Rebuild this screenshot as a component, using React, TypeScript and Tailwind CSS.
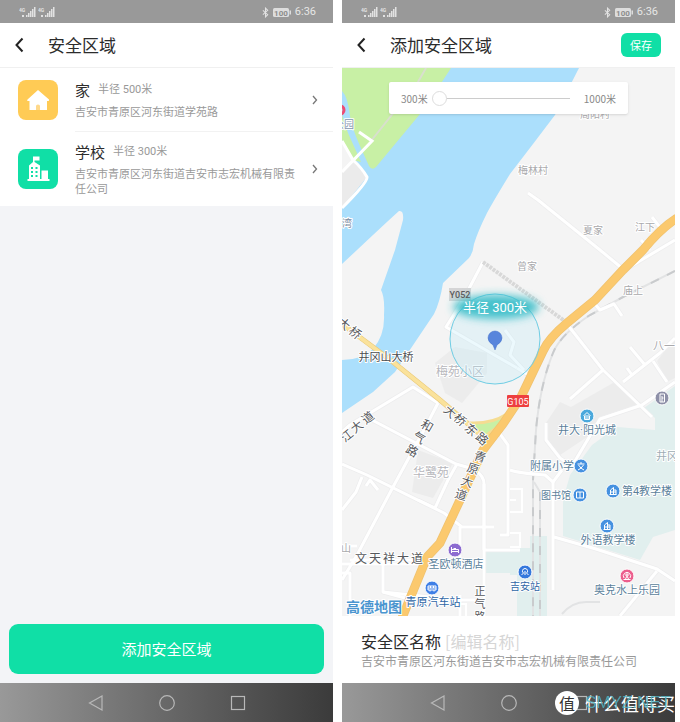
import type { ReactNode } from "react";

type Point = { x: number; y: number };

type MapLabel = Point & {
    text: string;
    size?: number;
    color?: string;
    rotate?: number;
};

const areaColor = "#a9a9ac";
const roadColor = "#56585c";
const placeColor = "#5b7f9b";

const mapLabels: MapLabel[] = [
    { text: "周阳村", x: 595, y: 118, size: 10, color: areaColor },
    { text: "梅林村", x: 533, y: 174, size: 10, color: areaColor },
    { text: "夏家", x: 593, y: 234, size: 10, color: areaColor },
    { text: "江下", x: 645, y: 231, size: 10, color: areaColor },
    { text: "曾家", x: 527, y: 270, size: 10, color: areaColor },
    { text: "庙上", x: 633, y: 294, size: 10, color: areaColor },
    { text: "八一", x: 664, y: 350, size: 11, color: areaColor },
    { text: "公园", x: 344, y: 128, size: 10, color: "#8294ae" },
    { text: "湾", x: 347, y: 227, size: 10, color: "#7b8ba1" },
    { text: "梅苑小区", x: 460, y: 376, size: 12, color: "#b6b6bb" },
    { text: "华鹭苑", x: 431, y: 477, size: 12, color: "#b6b6bb" },
    { text: "井冈", x: 667, y: 460, size: 11, color: "#9eadb5" },
    { text: "山", x: 346, y: 552, size: 10, color: areaColor },
    { text: "井冈山大桥", x: 386, y: 361, size: 11, color: "#4b4d50" },
    { text: "井大·阳光城", x: 587, y: 434, size: 11, color: placeColor },
    { text: "附属小学", x: 552, y: 470, size: 11, color: placeColor },
    { text: "图书馆", x: 556, y: 499, size: 10, color: placeColor },
    { text: "第4教学楼", x: 647, y: 495, size: 11, color: placeColor },
    { text: "外语教学楼", x: 608, y: 544, size: 11, color: placeColor },
    { text: "奥克水上乐园", x: 627, y: 594, size: 11, color: placeColor },
    { text: "圣欧顿酒店", x: 456, y: 568, size: 11, color: placeColor },
    { text: "青原汽车站", x: 433, y: 606, size: 11, color: "#2f66a6" },
    { text: "吉安站", x: 525, y: 590, size: 10, color: "#2f66a6" },
];

// Street names are set one character at a time so they follow the road.
const roadLabels: MapLabel[] = [
    { text: "大", x: 344, y: 324, rotate: 40 },
    { text: "桥", x: 355, y: 333, rotate: 40 },
    { text: "大", x: 450, y: 412, rotate: 42 },
    { text: "桥", x: 460, y: 420, rotate: 42 },
    { text: "东", x: 471, y: 430, rotate: 42 },
    { text: "路", x: 482, y: 439, rotate: 42 },
    { text: "青", x: 480, y: 457, rotate: 18 },
    { text: "原", x: 473, y: 469, rotate: 18 },
    { text: "大", x: 467, y: 482, rotate: 18 },
    { text: "道", x: 461, y: 495, rotate: 18 },
    { text: "江", x: 347, y: 436, rotate: -38 },
    { text: "大", x: 357, y: 427, rotate: -38 },
    { text: "道", x: 368, y: 418, rotate: -38 },
    { text: "和", x: 427, y: 426, rotate: 30 },
    { text: "气", x: 419, y: 438, rotate: 30 },
    { text: "路", x: 412, y: 451, rotate: 30 },
    { text: "文", x: 361, y: 559 },
    { text: "天", x: 375, y: 559 },
    { text: "祥", x: 389, y: 559 },
    { text: "大", x: 403, y: 559 },
    { text: "道", x: 417, y: 559 },
    { text: "正", x: 480, y: 591, size: 11 },
    { text: "气", x: 480, y: 604, size: 11 },
    { text: "路", x: 480, y: 617, size: 11 },
];

const minorRoads = [
    "M342 432 L350 425 L413 387 L438 403",
    "M372 420 L456 464 L470 468",
    "M342 464 L367 475 L444 513 L462 527 L494 527",
    "M438 403 L424 430 L393 487 L357 555 L342 580",
    "M362 477 L356 492 L342 510",
    "M457 464 L448 480 L435 508 L418 500",
    "M366 486 L370 480 L378 490",
    "M475 470 Q484 476 484 484 V550",
    "M484 484 V616",
    "M460 527 V560",
    "M495 427 L508 445 V535 H500",
    "M510 470 Q518 473 545 475 L553 482 L562 470",
    "M553 482 V590",
    "M546 423 V440 L560 458 L572 466",
    "M528 193 L538 200 L600 250 L623 269",
    "M567 324 L603 370 L652 417",
    "M603 370 L570 399",
    "M572 466 L600 419 L642 405 L675 382",
    "M623 382 L660 353 L675 338",
    "M630 347 L645 365",
    "M653 361 L667 382",
    "M627 368 L632 375",
    "M628 268 L675 240",
    "M594 303 L600 310 L614 304 L622 316",
    "M641 240 L650 250",
    "M652 217 L662 230",
    "M483 262 L463 300 L446 327 L517 368",
    "M517 368 L530 376",
    "M505 330 L514 342 L510 355 L524 370",
    "M554 537 L596 549 L657 569 L675 581",
    "M657 571 L620 616",
    "M342 546 H357 M342 573 H350 V616",
    "M383 560 V592 L430 597",
    "M350 560 H425",
    "M383 592 L405 598",
    "M427 600 H475 M460 595 V616",
    "M342 564 H484",
    "M484 550 H520",
];

const blockOutlines = ["M510 489 H522 V512 H510", "M510 500 H516", "M510 533 H520 V547 H510", "M440 604 H466 V616"];

const highway =
    "M677 218 Q660 229 643 250 L623 270 L595 300 L567 323 Q549 338 543 351 L521 397 L503 424 L483 450 L460 500 L440 543 L427 557 L402 618";

function BuildingGlyph() {
    return <path d="M-3.5 3.5 H3.5 M-2.5 3.5 V-1 L0.5 -3.5 V3.5 M0.5 -1 H3 V3.5 M-2.5 1 H3" />;
}

const pins: (Point & { color: string; glyph: ReactNode })[] = [
    { x: 587, y: 416, color: "#4aa8dc", glyph: <path d="M-3.5 0 L0 -3.5 L3.5 0 M-2.5 0 V3.5 H2.5 V0 M-1 3.5 V1 M1 3.5 V1 M-2 0 H2" /> },
    { x: 581, y: 466, color: "#4591e0", glyph: <path d="M0 -4 V-2 M-3.5 -2 H3.5 M-2.5 -1 Q0 3 3 4 M2.5 -1 Q0 3 -3 4" /> },
    { x: 580, y: 495, color: "#4591e0", glyph: <path d="M0 -3 H-3.5 V3 H3.5 V-3 H0 V3" /> },
    { x: 613, y: 491, color: "#4591e0", glyph: <BuildingGlyph /> },
    { x: 607, y: 526, color: "#4591e0", glyph: <BuildingGlyph /> },
    { x: 525, y: 572, color: "#3478dc", glyph: <path d="M-3.5 3 L-1.5 1 Q-3 0 -2.5 -1.5 Q-2 -3.5 0 -3.5 Q2 -3.5 2.5 -1.5 Q3 0 1.5 1 L3.5 3 M0 -1 V3" /> },
    { x: 432, y: 588, color: "#3f7fe6", glyph: <path d="M-4 -2 H4 V2 H-4 Z M-4 0 H4 M-2 2 V3.5 M2 2 V3.5 M-1.5 -2 V0 M1.5 -2 V0" /> },
    { x: 455, y: 550, color: "#8c6bd0", glyph: <path d="M-3.5 -3 V3 M-3.5 1.5 H3.5 V3 M3.5 1.5 V-0.5 H-3.5 M-1.5 -1.5 H1" /> },
    { x: 627, y: 576, color: "#ec5f8d", glyph: <path d="M-3 2 A3.6 3.6 0 1 1 3 2 M-2 4 L0 0 L2 4 M-2 -1 H2 M0 -3 V0 M-3.5 3.5 H3.5" /> },
    { x: 662, y: 398, color: "#8e90a8", glyph: <path d="M-2 -4 H2.5 V4 H-2 Z M0 -2 V4 M0 0 H1.5" /> },
];

function MapCanvas() {
    return (
        <svg
            viewBox="342 68 333 548"
            preserveAspectRatio="xMidYMid slice"
            className="absolute inset-0 h-full w-full font-[Roboto,'Noto_Sans_CJK_SC',sans-serif]"
            role="img"
            aria-label="地图"
        >
            <defs>
                <filter id="glow" x="-30%" y="-60%" width="160%" height="220%">
                    <feGaussianBlur stdDeviation="4" />
                </filter>
            </defs>
            <rect x="342" y="68" width="333" height="548" fill="#f4f4f4" />

            {/* river and park */}
            <path
                d="M342 68 H579 L555 115 L533 144 L510 174 Q494 200 487 213 Q478 231 474 244 Q473 253 469 258 L443 283 Q440 302 434 314 L395 372 L373 392 L342 413 V360 Q362 360 373 349 Q385 335 384 315 Q385 297 381 290 L395 250 L403 220 Q404 210 399 211 Q390 219 357 250 L342 264 Z"
                fill="#abdffc"
            />
            <path d="M342 68 H451 L434 94 L420 114 L376 167 Q372 171 369 166 L360 146 Q352 128 350 116 Q348 97 342 91 Z" fill="#c8f0a5" />
            <path d="M342 115 L348 133 L361 162 L353 160 L342 140 Z" fill="#c8f0a5" />
            <path d="M342 141 L353 160 L367 177 L342 208 Z" fill="#ebebeb" />
            <path d="M342 141 L353 160 L342 171 Z" fill="#f4f4f4" />
            <path d="M426 68 L418 82 L371 141" fill="none" stroke="#d9dfce" strokeWidth="2" />

            {/* built-up blocks and campus */}
            <g fill="#ececec">
                <path d="M435 363 L455 347 L487 353 V373 L462 403 L445 393 Z" />
                <path d="M418 450 L453 463 L433 498 L412 492 Z" />
                <path d="M560 402 L571 407 L613 383 L641 403 L600 419 L590 435 L560 455 L546 440 V423 Z" />
                <path d="M657 361 L675 338 V378 L667 382 Z" />
            </g>
            <g fill="#e1efee">
                <path d="M675 386 L644 408 L655 418 V430 L617 427 L592 445 L570 475 L563 500 V536 L640 560 L653 537 L675 530 Z" />
                <path d="M510 548 H530 V536 H547 V616 H517 V575 H510 Z" />
                <path d="M484 552 H513 V573 H484 Z" />
            </g>

            {/* railway */}
            <g fill="none" stroke="#e2e3e4" strokeWidth="2">
                <path d="M675 271 L623 297 L590 315 Q560 335 553 353 Q540 385 536 430 L533 480 V616" />
                <path d="M534 482 L540 492 V616" />
                <path d="M562 614 Q572 602 586 602 H600" />
            </g>
            <g fill="none" stroke="#c9cbcd" strokeWidth="2" strokeDasharray="9 9">
                <path d="M675 271 L623 297 L590 315 Q560 335 553 353 Q540 385 536 430 L533 480 V616" />
                <path d="M540 492 V616" />
            </g>

            {minorRoads.map((d) => (
                <path key={d} d={d} fill="none" stroke="#ededee" strokeWidth="4.5" strokeLinejoin="round" />
            ))}
            {minorRoads.map((d) => (
                <path key={d} d={d} fill="none" stroke="#ffffff" strokeWidth="3" strokeLinejoin="round" />
            ))}
            {blockOutlines.map((d) => (
                <path key={d} d={d} fill="none" stroke="#ffffff" strokeWidth="2" />
            ))}
            <path d="M359 132 L372 141 L342 172 M342 141 L353 160 Q362 168 367 177 Q368 182 342 208" fill="none" stroke="#ffffff" strokeWidth="3" />
            <path d="M483 262 L566 322" fill="none" stroke="#d8d8d8" strokeWidth="4" strokeDasharray="3 1" />

            {/* main roads */}
            <path d="M470 423 Q490 425 506 416 L490 440 Z" fill="#c8f0a5" />
            <path d="M470 423 Q492 424 507 414 M484 440 Q486 433 500 426" fill="none" stroke="#f5dc92" strokeWidth="3" />
            <path d="M342 324 L393 362 L440 400 L487 440" fill="none" stroke="#eac978" strokeWidth="5" />
            <path d="M342 324 L393 362 L440 400 L487 440" fill="none" stroke="#fae29b" strokeWidth="4" />
            <path d={highway} fill="none" stroke="#efc270" strokeWidth="9" />
            <path d={highway} fill="none" stroke="#fbc96e" strokeWidth="7.5" />

            {/* labels */}
            <g textAnchor="middle" stroke="#ffffff" strokeWidth="2" strokeLinejoin="round" className="[paint-order:stroke]">
                {mapLabels.map((l) => (
                    <text key={l.text} x={l.x} y={l.y} fontSize={l.size} fill={l.color}>
                        {l.text}
                    </text>
                ))}
                {roadLabels.map((l) => (
                    <text
                        key={`${l.text}${l.x}`}
                        x={l.x}
                        y={l.y}
                        dy="4"
                        fontSize={l.size ?? 12}
                        fill={roadColor}
                        transform={l.rotate ? `rotate(${l.rotate} ${l.x} ${l.y})` : undefined}
                    >
                        {l.text}
                    </text>
                ))}
            </g>
            <circle cx="340" cy="110" r="4" fill="none" stroke="#ec4d73" strokeWidth="3" />
            {pins.map((p) => (
                <g key={`${p.x}-${p.y}`} transform={`translate(${p.x} ${p.y})`} fill="none" stroke="#ffffff" strokeWidth="1">
                    <circle r="7" fill={p.color} />
                    {p.glyph}
                </g>
            ))}

            {/* road shields */}
            <rect x="449" y="288" width="22" height="13" fill="#d5d5d6" />
            <rect x="507" y="395" width="22" height="12" rx="1" fill="#ee3f3f" />
            <text x="518" y="405" textAnchor="middle" fontSize="9" fill="#ffffff">G105</text>

            {/* selected zone */}
            <circle cx="495" cy="339" r="45" fill="#bfeaf8" fillOpacity="0.3" stroke="#6fcde4" strokeWidth="1" />
            <ellipse cx="496" cy="307" rx="43" ry="12" fill="#35bcc8" fillOpacity="0.9" filter="url(#glow)" />
            <text x="460" y="298" textAnchor="middle" fontSize="9" fontWeight="500" fill="#5a5b5d">Y052</text>
            <text x="495" y="312" textAnchor="middle" fontSize="13" fill="#ffffff">半径 300米</text>
            <path d="M495 350 L493 345 Q488 342 488 338 A7 7 0 0 1 502 338 Q502 342 497 345 Z" fill="#5785dc" stroke="#4571c8" strokeWidth="0.5" />

            <text x="374" y="612" textAnchor="middle" fontSize="14" fontWeight="700" fill="#4a95cf" stroke="#ffffff" strokeWidth="2" className="[paint-order:stroke]">
                高德地图
            </text>
        </svg>
    );
}

function SignalIcon() {
    return (
        <svg viewBox="0 0 17 14" className="h-[14px] w-[17px]" fill="#e2e2e2" aria-hidden="true">
            <text x="0" y="6" fontSize="5" fontWeight="700">4G</text>
            <path d="M3 9h2v2H3zM7 9h1.5v2H7zM9 7h1.5v4H9zM11 5h1.5v6H11zM13 3h1.5v8H13zM15 1h1.5v10H15z" />
        </svg>
    );
}

function StatusBar() {
    return (
        <div className="flex h-[23px] shrink-0 items-center bg-[#999999] pt-[2px] pr-[17px] pl-[19px] font-[Roboto,sans-serif] text-[11px] text-[#e6e6e6]">
            <div className="flex gap-[2px]">
                <SignalIcon />
                <SignalIcon />
            </div>
            <div className="ml-auto flex items-center gap-1">
                <svg viewBox="0 0 8 12" className="h-[11px] w-[7px]" fill="none" stroke="#e2e2e2" strokeWidth="1.2" aria-hidden="true">
                    <path d="M1 3.5 L6.5 8.5 L4 11 V1 L6.5 3.5 L1 8.5" />
                </svg>
                <svg viewBox="0 0 18 10" className="h-[10px] w-[18px]" aria-hidden="true">
                    <rect width="16" height="9" rx="1.5" fill="#dddddd" />
                    <rect x="16.5" y="2.5" width="1.5" height="4" fill="#dddddd" />
                    <text x="8" y="7.5" textAnchor="middle" fontSize="8" fontWeight="700" fill="#8c8c8c">100</text>
                </svg>
                <span>6:36</span>
            </div>
        </div>
    );
}

function NavBar({ children }: { children?: ReactNode }) {
    return (
        <nav className="relative flex h-[39px] shrink-0 items-center justify-center gap-[55px] bg-linear-to-r from-[#999999] to-[#3b3b3b]">
            <button type="button" aria-label="返回">
                <svg viewBox="0 0 16 16" className="size-4" fill="none" stroke="#b8b8b8" strokeWidth="1.2">
                    <path d="M14 1 V15 L1.5 8 Z" />
                </svg>
            </button>
            <button type="button" aria-label="主页">
                <svg viewBox="0 0 16 16" className="size-4" fill="none" stroke="#b8b8b8" strokeWidth="1.2">
                    <circle cx="8" cy="8" r="7.3" />
                </svg>
            </button>
            <button type="button" aria-label="最近任务">
                <svg viewBox="0 0 16 16" className="size-4" fill="none" stroke="#b8b8b8" strokeWidth="1.2">
                    <rect x="1.5" y="1.5" width="13" height="13" />
                </svg>
            </button>
            {children}
        </nav>
    );
}

function Header({ title, children }: { title: string; children?: ReactNode }) {
    return (
        <header className="flex h-[45px] shrink-0 items-center border-b border-[#f0f0f0] bg-white px-[14px]">
            <button type="button" aria-label="返回">
                <svg viewBox="0 0 12 16" className="h-4 w-3" fill="none" stroke="#222222" strokeWidth="2">
                    <path d="M8.5 1.5 L2.5 8 L8.5 14.5" />
                </svg>
            </button>
            <h1 className="ml-[22px] text-[17px] text-[#2c2c2c]">{title}</h1>
            {children}
        </header>
    );
}

function HomeIcon() {
    return (
        <svg viewBox="0 0 40 40" className="size-10" aria-hidden="true">
            <path d="M20 10 L31 19.5 Q31.5 21 30 21 H29 V30 H11.5 V21 H10.5 Q8.5 21 9.5 19.5 Z" fill="#fff" />
            <path d="M18 30 V26 Q18 24.5 20 24.5 Q22 24.5 22 26 V30 Z" fill="#ffd98a" />
        </svg>
    );
}

function SchoolIcon() {
    return (
        <svg viewBox="0 0 40 40" className="size-10" aria-hidden="true">
            <path d="M15 7.5 H21.5 V11.5 H16.5 V13 L22 16.5 V30 H23.5 V21.5 H30 V30 H31.5 V32 H9.5 V30 H11 V16.5 L15 13 Z" fill="#fff" />
            <path d="M13 18h2v2h-2zM17.5 18h2v2h-2zM13 22h2v2h-2zM17.5 22h2v2h-2zM13 26h2v2h-2zM17.5 26h2v2h-2z" fill="#10dfa6" />
        </svg>
    );
}

function ZoneRow({ name, radius, address, icon, tint }: { name: string; radius: string; address: string; icon: ReactNode; tint: string }) {
    return (
        <li className="group">
            <button type="button" className="flex w-full items-center pl-[18px] text-left">
                <span className={`${tint} shrink-0 rounded-lg`}>{icon}</span>
                <span className="ml-[17px] flex min-h-16 flex-1 items-center border-b border-[#f2f2f2] py-[10px] pr-[14px] group-last:border-b-0">
                    <span className="flex-1">
                        <span className="flex items-center gap-2 leading-5">
                            <span className="text-[15px] text-[#2c2c2c]">{name}</span>
                            <span className="font-[Roboto,'Noto_Sans_CJK_SC',sans-serif] text-[11px] text-[#999999]">{radius}</span>
                        </span>
                        <span className="mt-1 block pr-3 text-[11px] leading-[15px] text-[#999999]">{address}</span>
                    </span>
                    <svg viewBox="0 0 8 12" className="h-3 w-2" fill="none" stroke="#777777" strokeWidth="1.3" aria-hidden="true">
                        <path d="M2 2 L5.5 6 L2 10" />
                    </svg>
                </span>
            </button>
        </li>
    );
}

function Watermark() {
    return (
        <div className="absolute right-0 bottom-0 flex h-full items-center gap-[6px] whitespace-nowrap">
            <span className="flex size-6 items-center justify-center rounded-full bg-white text-base text-[#333333]">值</span>
            <span className="relative text-lg leading-none text-white">
                <span>什么值得买</span>
                <span className="absolute top-0 left-0 font-['Liberation_Sans',sans-serif] text-[17px] text-[#4fb5c4] opacity-80">SMYZ.NET</span>
            </span>
        </div>
    );
}

export default function App() {
    return (
        <main className="grid min-h-screen grid-cols-2 gap-[9px] bg-white pr-[5px] font-['Noto_Sans_CJK_SC',sans-serif]">
            <section className="flex flex-col bg-[#f3f4f7]">
                <StatusBar />
                <Header title="安全区域" />
                <ul className="bg-white">
                    <ZoneRow name="家" radius="半径 500米" address="吉安市青原区河东街道学苑路" icon={<HomeIcon />} tint="bg-[#ffcb55]" />
                    <ZoneRow name="学校" radius="半径 300米" address="吉安市青原区河东街道吉安市志宏机械有限责任公司" icon={<SchoolIcon />} tint="bg-[#10dfa6]" />
                </ul>
                <button type="button" className="mx-[9px] mt-auto mb-[9px] h-[50px] rounded-[9px] bg-[#10dfa6] text-[15px] text-white">
                    添加安全区域
                </button>
                <NavBar />
            </section>

            <section className="flex flex-col bg-white">
                <StatusBar />
                <Header title="添加安全区域">
                    <button type="button" className="ml-auto h-6 rounded-md bg-[#10dfa6] px-[9px] text-[11px] text-white">
                        保存
                    </button>
                </Header>
                <div className="relative flex-1 overflow-hidden">
                    <MapCanvas />
                    <div className="relative mx-[47px] mt-[14px] flex h-8 items-center rounded-xs bg-white px-3 text-[10px] text-[#888888] shadow-sm">
                        <label htmlFor="radius">300米</label>
                        <input
                            id="radius"
                            type="range"
                            min={300}
                            max={1000}
                            defaultValue={300}
                            className="mr-[14px] ml-1 h-4 min-w-0 flex-1 appearance-none bg-transparent [&::-webkit-slider-runnable-track]:h-px [&::-webkit-slider-runnable-track]:bg-[#cccccc] [&::-webkit-slider-thumb]:-mt-[7px] [&::-webkit-slider-thumb]:size-[15px] [&::-webkit-slider-thumb]:appearance-none [&::-webkit-slider-thumb]:rounded-full [&::-webkit-slider-thumb]:border [&::-webkit-slider-thumb]:border-[#dddddd] [&::-webkit-slider-thumb]:bg-white"
                        />
                        <span>1000米</span>
                    </div>
                </div>
                <div className="px-[19px] pt-[13px] pb-[14px]">
                    <div className="flex gap-1 text-base leading-6">
                        <h2 className="text-[#2c2c2c]">安全区名称</h2>
                        <button type="button" className="text-[#d6d6d6]">[编辑名称]</button>
                    </div>
                    <p className="text-xs leading-4 text-[#999999]">吉安市青原区河东街道吉安市志宏机械有限责任公司</p>
                </div>
                <NavBar>
                    <Watermark />
                </NavBar>
            </section>
        </main>
    );
}
